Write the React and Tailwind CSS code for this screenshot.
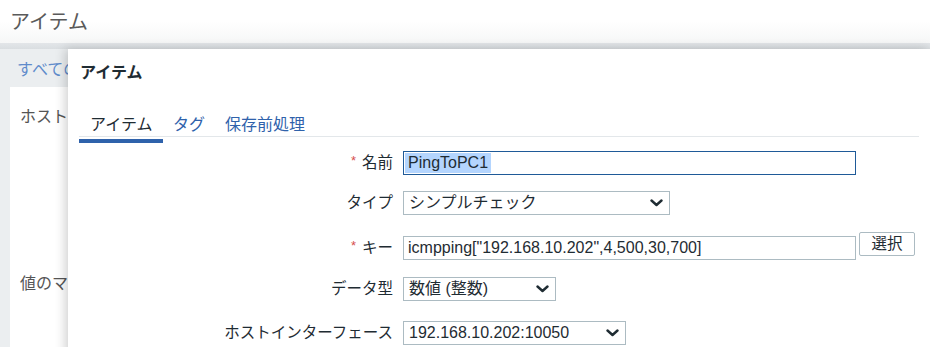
import React from "react";

const Chevron = () => (
  <svg width="13" height="8" viewBox="0 0 13 8" className="shrink-0">
    <path d="M1.5 1.5 L6.5 6 L11.5 1.5" fill="none" stroke="#1f2c33" strokeWidth="2.4" strokeLinecap="round" strokeLinejoin="round" />
  </svg>
);

const Label = ({ required, children }) => (
  <div className="w-[325px] shrink-0 text-right text-[15.5px] leading-[20px] text-[#1f2c33]">
    {required && <span className="text-[#d64e4e] text-[13px] mr-[6px] relative top-[-3px]">*</span>}
    {children}
  </div>
);

const Select = ({ width, value }) => (
  <div className={`${width} h-[24px] ml-[10px] border border-[#acbbc2] bg-white flex items-center justify-between pl-[5px] pr-[6px] text-[16px] text-[#1f2c33]`}>
    <span>{value}</span>
    <Chevron />
  </div>
);

const App = () => {
  return (
    <div className="relative w-[930px] h-[347px] overflow-hidden bg-[#ebeef0] font-[family-name:'Liberation_Sans','Noto_Sans_CJK_JP',sans-serif]">
      {/* page header */}
      <header className="h-[43px] bg-gradient-to-b from-white via-white to-[#f6f7f7] px-[10px] flex items-center text-[20px] text-[#5a5a5a]">
        アイテム
      </header>
      <div className="h-[6px] bg-gradient-to-b from-[#e3e6e9] to-[#dadee1]" />
      <div className="ml-[17px] pt-[11px] h-[38px] w-[51px] overflow-hidden text-[16px] leading-[20px] text-[#5f8bcb] whitespace-nowrap">
        すべての
      </div>
      <div className="ml-[10px] w-[58px] h-[300px] overflow-hidden bg-white pl-[10px] pt-[20px] text-[16px] leading-[20px] text-[#555] whitespace-nowrap">
        <div>ホスト</div>
        <div className="mt-[147px]">値のマ</div>
      </div>

      {/* modal */}
      <div className="absolute left-[68px] top-[49px] right-0 bottom-[-20px] bg-white shadow-[-3px_0_10px_rgba(0,0,0,0.18)]">
        <div className="pt-[14px] pl-[12px] text-[16px] leading-[20px] font-bold text-[#1f2c33]">アイテム</div>

        <div className="mx-[11px] mt-[32px] flex border-b border-[#e3e7ea] text-[16px] leading-[20px]">
          <div className="relative w-[84px] h-[21px] pl-[11px] text-[#1f2c33]">
            アイテム
            <span className="absolute left-0 right-0 top-[24px] h-[4px] bg-[#2f62ab]" />
          </div>
          <div className="h-[21px] px-[10px] text-[#2f62ab]">タグ</div>
          <div className="h-[21px] pl-[10px] text-[#2f62ab]">保存前処理</div>
        </div>

        {/* form */}
        <div className="mt-[14px] flex items-center">
          <Label required>名前</Label>
          <div className="w-[453px] h-[24px] ml-[10px] border border-[#1f5a98] flex items-center text-[16px] text-[#1f2c33]">
            <span className="ml-[1px] px-[3px] bg-[#b4d5fe] leading-[20px]">PingToPC1</span>
          </div>
        </div>

        <div className="mt-[16px] flex items-center">
          <Label>タイプ</Label>
          <Select width="w-[267px]" value="シンプルチェック" />
        </div>

        <div className="mt-[17px] flex items-start">
          <div className="mt-[4px] flex items-center">
            <Label required>キー</Label>
            <div className="w-[453px] h-[24px] ml-[10px] border border-[#acbbc2] flex items-center pl-[4px] text-[16px] text-[#1f2c33] whitespace-nowrap">
              icmpping["192.168.10.202",4,500,30,700]
            </div>
          </div>
          <div className="ml-[3px] w-[56px] h-[24px] border border-[#acbbc2] rounded-[2px] bg-white flex items-center justify-center text-[15.5px] text-[#1f2c33]">
            選択
          </div>
        </div>

        <div className="mt-[17px] flex items-center">
          <Label>データ型</Label>
          <Select width="w-[153px]" value="数値 (整数)" />
        </div>

        <div className="mt-[20px] flex items-center">
          <Label>ホストインターフェース</Label>
          <Select width="w-[223px]" value="192.168.10.202:10050" />
        </div>
      </div>
    </div>
  );
};

export default App;
